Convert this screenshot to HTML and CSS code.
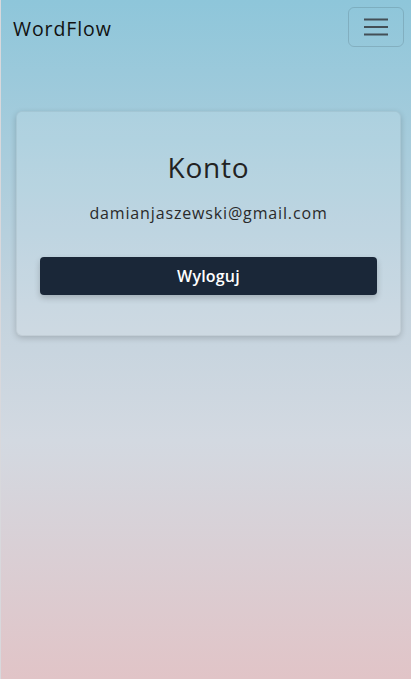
FILE: index.html
```html
<!DOCTYPE html>
<html lang="pl">
<head>
<meta charset="utf-8">
<title>WordFlow - Konto</title>
<link rel="stylesheet" href="styles.css">
</head>
<body>
<div class="page">
  <nav class="navbar">
    <span class="brand">WordFlow</span>
    <button class="toggler" aria-label="Menu">
      <svg width="26" height="20" viewBox="0 0 26 20"><path d="M1 2.5h24M1 10h24M1 17.5h24" stroke="#434f56" stroke-width="2" fill="none"/></svg>
    </button>
  </nav>
  <main class="content">
    <section class="card">
      <h1 class="title">Konto</h1>
      <p class="email">damianjaszewski@gmail.com</p>
      <button class="logout">Wyloguj</button>
    </section>
  </main>
</div>
</body>
</html>
```
FILE: styles.css
```css
* { box-sizing: border-box; }
html, body { margin: 0; padding: 0; height: 100%; }
body {
  font-family: "Open Sans", "Noto Sans", sans-serif;
  background: #d8d8dc;
}
.page {
  margin-left: 1px;
  min-height: 679px;
  background: linear-gradient(180deg, #8ec6da 0%, #c3d3de 45%, #d3d9e1 65%, #e1c4c7 100%);
  display: flex;
  flex-direction: column;
}
.navbar {
  height: 54px;
  padding: 7px 7px 0 12px;
  display: flex;
  justify-content: space-between;
  align-items: flex-start;
}
.brand {
  font-size: 19.5px;
  font-weight: 500;
  color: #111;
  margin-top: 8px;
  letter-spacing: 0.9px;
}
.toggler {
  width: 56px;
  height: 40px;
  border: 1px solid rgba(0,0,0,0.12);
  border-radius: 6px;
  background: transparent;
  display: flex;
  align-items: center;
  justify-content: center;
  padding: 0;
}
.content {
  padding: 57px 10px 0 15px;
}
.card {
  background: rgba(255,255,255,0.12);
  border: 1px solid rgba(0,0,0,0.05);
  border-radius: 6px;
  box-shadow: 0 2px 6px rgba(0,0,0,0.18);
  padding: 36px 23px 40px;
  display: flex;
  flex-direction: column;
  align-items: center;
}
.title {
  margin: 0;
  font-size: 28px;
  font-weight: 500;
  color: #222;
  line-height: 38px;
  letter-spacing: 0.8px;
}
.email {
  margin: 16px 0 0;
  font-size: 16px;
  color: #2a2a2a;
  line-height: 22px;
  letter-spacing: 0.85px;
}
.logout {
  margin-top: 33px;
  width: 100%;
  height: 38px;
  background: #1a2738;
  color: #fff;
  border: none;
  border-radius: 4px;
  font-family: inherit;
  font-size: 16px;
  font-weight: 600;
  letter-spacing: 0.2px;
  box-shadow: 0 3px 6px rgba(0,0,0,0.2);
}
```
